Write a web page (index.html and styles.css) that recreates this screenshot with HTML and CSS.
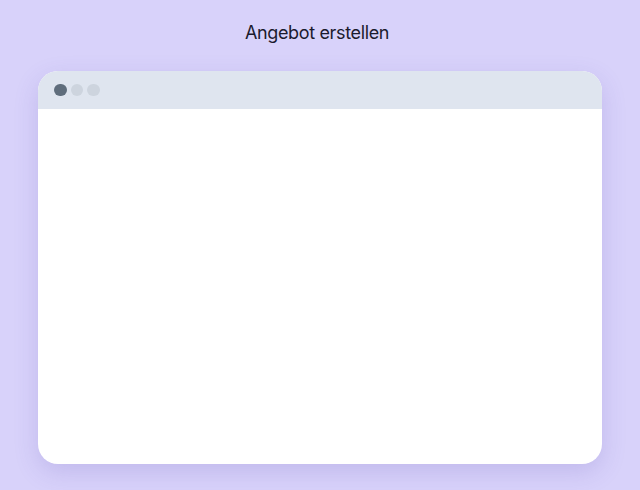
FILE: index.html
```html
<!DOCTYPE html>
<html lang="de">
<head>
    <meta charset="UTF-8">
    <meta name="viewport" content="width=device-width, initial-scale=1.0">
    <title>Angebot erstellen</title>
    <link rel="stylesheet" href="styles.css">
</head>
<body>
    <div class="stage">
        <h1 class="title">Angebot erstellen</h1>

        <!-- Browser window mockup -->
        <div class="window">
            <div class="window-bar">
                <span class="dot dot-active"></span>
                <span class="dot"></span>
                <span class="dot"></span>
            </div>
            <div class="window-body"></div>
        </div>
    </div>
</body>
</html>
```

FILE: styles.css
```css
html, body {
    margin: 0;
    padding: 0;
}
body {
    font-family: Inter, 'Noto Sans', sans-serif;
    background: #d8d2fa;
    color: #1b1b2e;
}
.stage {
    width: 640px;
    height: 490px;
    box-sizing: border-box;
    padding: 21px 38px 0 38px;
}
.title {
    margin: 0 0 26px 0;
    font-size: 18px;
    font-weight: 400;
    line-height: 24px;
    text-align: center;
    padding-right: 6px;
    letter-spacing: -0.35px;
}
.window {
    width: 564px;
    height: 393px;
    background: white;
    border-radius: 20px;
    overflow: hidden;
    box-shadow: 0 8px 24px rgba(90, 70, 180, 0.18);
    display: flex;
    flex-direction: column;
}
.window-bar {
    height: 38px;
    flex-shrink: 0;
    background: #dfe5ef;
    display: flex;
    align-items: center;
    gap: 4px;
    padding: 0 0 0 16px;
}
.dot {
    width: 12.5px;
    height: 12.5px;
    border-radius: 50%;
    background: #cdd4de;
}
.dot-active {
    background: #5f6d7c;
}
.window-body {
    flex: 1;
}
```
